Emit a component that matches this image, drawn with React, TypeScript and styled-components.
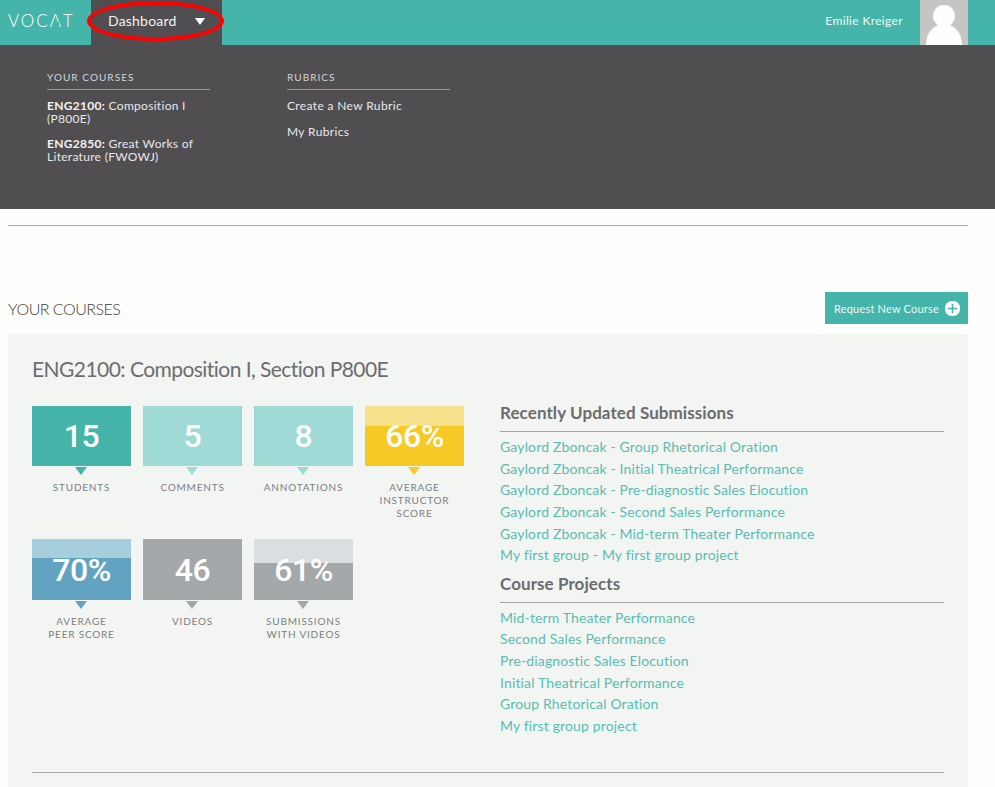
import styled, { createGlobalStyle } from "styled-components";

const GlobalStyle = createGlobalStyle`
    html, body {
        margin: 0;
        height: 100%;
        overflow: hidden;
        background: #fefefc;
    }

    body {
        font-family: "Lato", "Liberation Sans", sans-serif;
    }
`

const TopBar = styled.header`
    height: 45px;
    background: #45b4a9;
    display: flex;
    position: relative;
`

const Logo = styled.div`
    width: 91px;
    padding-left: 8px;
    box-sizing: border-box;
    line-height: 42px;
    font-size: 17px;
    font-weight: 300;
    letter-spacing: 2px;
    color: #fff;
`

const LogoA = styled.span`
    position: relative;

    &::after {
        content: "";
        position: absolute;
        left: 3px;
        width: 6px;
        top: 12px;
        height: 3px;
        background: #45b4a9;
    }
`

const DashboardTab = styled.div`
    width: 131px;
    background: #504e51;
    color: #f2f2f2;
    display: flex;
    align-items: center;
    padding: 0 17px;
    box-sizing: border-box;
    justify-content: space-between;
    font-size: 14px;
    letter-spacing: 0.2px;
    padding-bottom: 5px;
`

const Caret = styled.span`
    width: 0;
    height: 0;
    margin-top: 2px;
    border-left: 5px solid transparent;
    border-right: 5px solid transparent;
    border-top: 7px solid #fff;
`

const Annotation = styled.div`
    position: absolute;
    left: 87px;
    top: 1px;
    width: 137px;
    height: 40px;
    box-sizing: border-box;
    border: 4px solid #f00;
    border-radius: 50%;
`

const UserArea = styled.div`
    margin-left: auto;
    margin-right: 27px;
    display: flex;
    align-items: center;
    gap: 17px;
    color: #f2faf9;
    font-size: 12px;
    letter-spacing: 0.35px;
`

const UserName = styled.span`
    padding-bottom: 4px;
`

const Avatar = styled.svg`
    display: block;
    width: 48px;
    height: 45px;
`

const DropdownPanel = styled.nav`
    height: 164px;
    background: #504e51;
    padding: 26px 0 0 47px;
    box-sizing: border-box;
    display: flex;
    gap: 77px;
`

const MenuColumn = styled.div`
    width: 163px;
`

const MenuTitle = styled.h3`
    margin: 0 0 9px;
    padding-bottom: 6px;
    border-bottom: 1px solid #979698;
    font-size: 10px;
    line-height: 12px;
    font-weight: 400;
    letter-spacing: 1.05px;
    text-transform: uppercase;
    color: #d5d5d5;
`

const MenuItem = styled.a<{ $single?: boolean }>`
    display: block;
    margin-bottom: 12px;
    font-size: 12px;
    line-height: ${(p) => (p.$single ? 14 : 13)}px;
    letter-spacing: ${(p) => (p.$single ? 0.36 : 0.3)}px;
    color: #e8e8e8;

    b {
        font-weight: 700;
        color: #f4f4f4;
    }
`

const Main = styled.main`
    width: 960px;
    margin-left: 8px;
`

const Divider = styled.hr`
    margin: 16px 0 0;
    border: 0;
    border-top: 1px solid #aaa;
`

const SectionHeader = styled.div`
    margin-top: 66px;
    height: 32px;
    display: flex;
    align-items: center;
    justify-content: space-between;
`

const SectionTitle = styled.h2`
    margin: 0;
    font-size: 16px;
    font-weight: 300;
    letter-spacing: -0.5px;
    color: #3e3d40;
    text-transform: uppercase;
`

const RequestButton = styled.button`
    width: 143px;
    height: 32px;
    border: 0;
    background: #45b4a9;
    color: #eef8f7;
    font-family: inherit;
    font-size: 11px;
    letter-spacing: 0.2px;
    display: flex;
    align-items: center;
    justify-content: space-between;
    padding: 0 8px 0 9px;
`

const PlusIcon = styled.svg`
    width: 15px;
    height: 15px;
    display: block;
`

const CourseCard = styled.section`
    margin-top: 10px;
    background: #f3f5f3;
    padding: 24px 24px 0;
    height: 500px;
    box-sizing: border-box;
`

const CourseTitle = styled.h2`
    margin: 0;
    height: 48px;
    line-height: 22px;
    font-size: 21px;
    font-weight: 400;
    letter-spacing: -0.55px;
    color: #6b6e70;
`

const CourseBody = styled.div`
    display: flex;
    gap: 36px;
    height: 366px;
    border-bottom: 1px solid #a6a8ab;
`

const StatGrid = styled.div`
    width: 432px;
    display: grid;
    grid-template-columns: repeat(4, 99px);
    grid-auto-rows: 133px;
    column-gap: 12px;
`

const Stat = styled.div`
    display: flex;
    flex-direction: column;
    align-items: center;
`

const StatTile = styled.div<{ $color: string; $light?: string; $percent?: number; $tall?: boolean }>`
    width: 100%;
    height: ${(p) => (p.$tall ? 61 : 60)}px;
    display: flex;
    align-items: center;
    justify-content: center;
    color: #fff;
    font-family: "Roboto", "Liberation Sans", sans-serif;
    font-size: 32px;
    font-weight: 500;
    letter-spacing: -0.4px;
    background: ${(p) =>
        p.$percent !== undefined
            ? `linear-gradient(to top, ${p.$color} ${p.$percent}%, ${p.$light} ${p.$percent}%)`
            : p.$color};
`

const StatArrow = styled.span<{ $color: string }>`
    margin-top: 1px;
    margin-right: 1px;
    width: 0;
    height: 0;
    border-left: 6px solid transparent;
    border-right: 6px solid transparent;
    border-top: 8px solid ${(p) => p.$color};
`

const StatLabel = styled.div`
    margin-top: 6px;
    width: 100%;
    text-align: center;
    font-size: 10px;
    line-height: 13px;
    letter-spacing: 0.8px;
    text-transform: uppercase;
    color: #7c7f82;
`

const SideColumn = styled.div`
    width: 444px;
`

const SideTitle = styled.h3`
    margin: 0 0 4px;
    height: 25px;
    line-height: 14px;
    font-size: 17px;
    font-weight: 700;
    letter-spacing: 0.08px;
    color: #6b6c6e;
    border-bottom: 1px solid #a3a4a6;
`

const LinkList = styled.div`
    margin-bottom: 11px;
`

const SideLink = styled.a`
    display: block;
    height: 21.65px;
    line-height: 21px;
    font-size: 14px;
    letter-spacing: 0.15px;
    color: #58bdb2;
`

const submissions = [
    "Gaylord Zboncak - Group Rhetorical Oration",
    "Gaylord Zboncak - Initial Theatrical Performance",
    "Gaylord Zboncak - Pre-diagnostic Sales Elocution",
    "Gaylord Zboncak - Second Sales Performance",
    "Gaylord Zboncak - Mid-term Theater Performance",
    "My first group - My first group project",
];

const projects = [
    "Mid-term Theater Performance",
    "Second Sales Performance",
    "Pre-diagnostic Sales Elocution",
    "Initial Theatrical Performance",
    "Group Rhetorical Oration",
    "My first group project",
];

const stats = [
    { value: "15", label: ["Students"], color: "#45b4a9" },
    { value: "5", label: ["Comments"], color: "#a0dad6" },
    { value: "8", label: ["Annotations"], color: "#a0dad6" },
    { value: "66%", label: ["Average", "Instructor", "Score"], color: "#f6c924", light: "#f7e18c", percent: 66.7 },
    { value: "70%", label: ["Average", "Peer Score"], color: "#61a3c1", light: "#a6cfde", percent: 69, tall: true },
    { value: "46", label: ["Videos"], color: "#a4a8aa", tall: true },
    { value: "61%", label: ["Submissions", "With Videos"], color: "#a4a8aa", light: "#d9dee0", percent: 61, tall: true },
];

export default function App() {
    return (
        <>
            <GlobalStyle />
            <TopBar>
                <Logo>VOC<LogoA>A</LogoA>T</Logo>
                <DashboardTab>
                    Dashboard
                    <Caret />
                </DashboardTab>
                <UserArea>
                    <UserName>Emilie Kreiger</UserName>
                    <Avatar viewBox="0 0 48 45">
                        <rect width="48" height="45" fill="#c5c6c3" />
                        <circle cx="24" cy="16" r="11" fill="#fefefc" />
                        <path d="M6 45 C6 32 14 24 24 24 C34 24 42 32 42 45 Z" fill="#fefefc" />
                    </Avatar>
                </UserArea>
                <Annotation />
            </TopBar>
            <DropdownPanel>
                <MenuColumn>
                    <MenuTitle>Your Courses</MenuTitle>
                    <MenuItem><b>ENG2100:</b> Composition I<br />(P800E)</MenuItem>
                    <MenuItem><b>ENG2850:</b> Great Works of<br />Literature (FWOWJ)</MenuItem>
                </MenuColumn>
                <MenuColumn>
                    <MenuTitle>Rubrics</MenuTitle>
                    <MenuItem $single>Create a New Rubric</MenuItem>
                    <MenuItem $single>My Rubrics</MenuItem>
                </MenuColumn>
            </DropdownPanel>
            <Main>
                <Divider />
                <SectionHeader>
                    <SectionTitle>Your Courses</SectionTitle>
                    <RequestButton>
                        Request New Course
                        <PlusIcon viewBox="0 0 15 15">
                            <rect width="15" height="15" rx="6.5" fill="#fff" />
                            <path d="M7.5 3v9M3 7.5h9" stroke="#45b4a9" strokeWidth="1.6" />
                        </PlusIcon>
                    </RequestButton>
                </SectionHeader>
                <CourseCard>
                    <CourseTitle>ENG2100: Composition I, Section P800E</CourseTitle>
                    <CourseBody>
                        <StatGrid>
                            {stats.map((stat) => (
                                <Stat key={stat.value}>
                                    <StatTile $color={stat.color} $light={stat.light} $percent={stat.percent} $tall={stat.tall}>
                                        {stat.value}
                                    </StatTile>
                                    <StatArrow $color={stat.color} />
                                    <StatLabel>
                                        {stat.label.map((line) => <div key={line}>{line}</div>)}
                                    </StatLabel>
                                </Stat>
                            ))}
                        </StatGrid>
                        <SideColumn>
                            <SideTitle>Recently Updated Submissions</SideTitle>
                            <LinkList>
                                {submissions.map((item) => <SideLink key={item}>{item}</SideLink>)}
                            </LinkList>
                            <SideTitle>Course Projects</SideTitle>
                            <LinkList>
                                {projects.map((item) => <SideLink key={item}>{item}</SideLink>)}
                            </LinkList>
                        </SideColumn>
                    </CourseBody>
                </CourseCard>
            </Main>
        </>
    );
}
